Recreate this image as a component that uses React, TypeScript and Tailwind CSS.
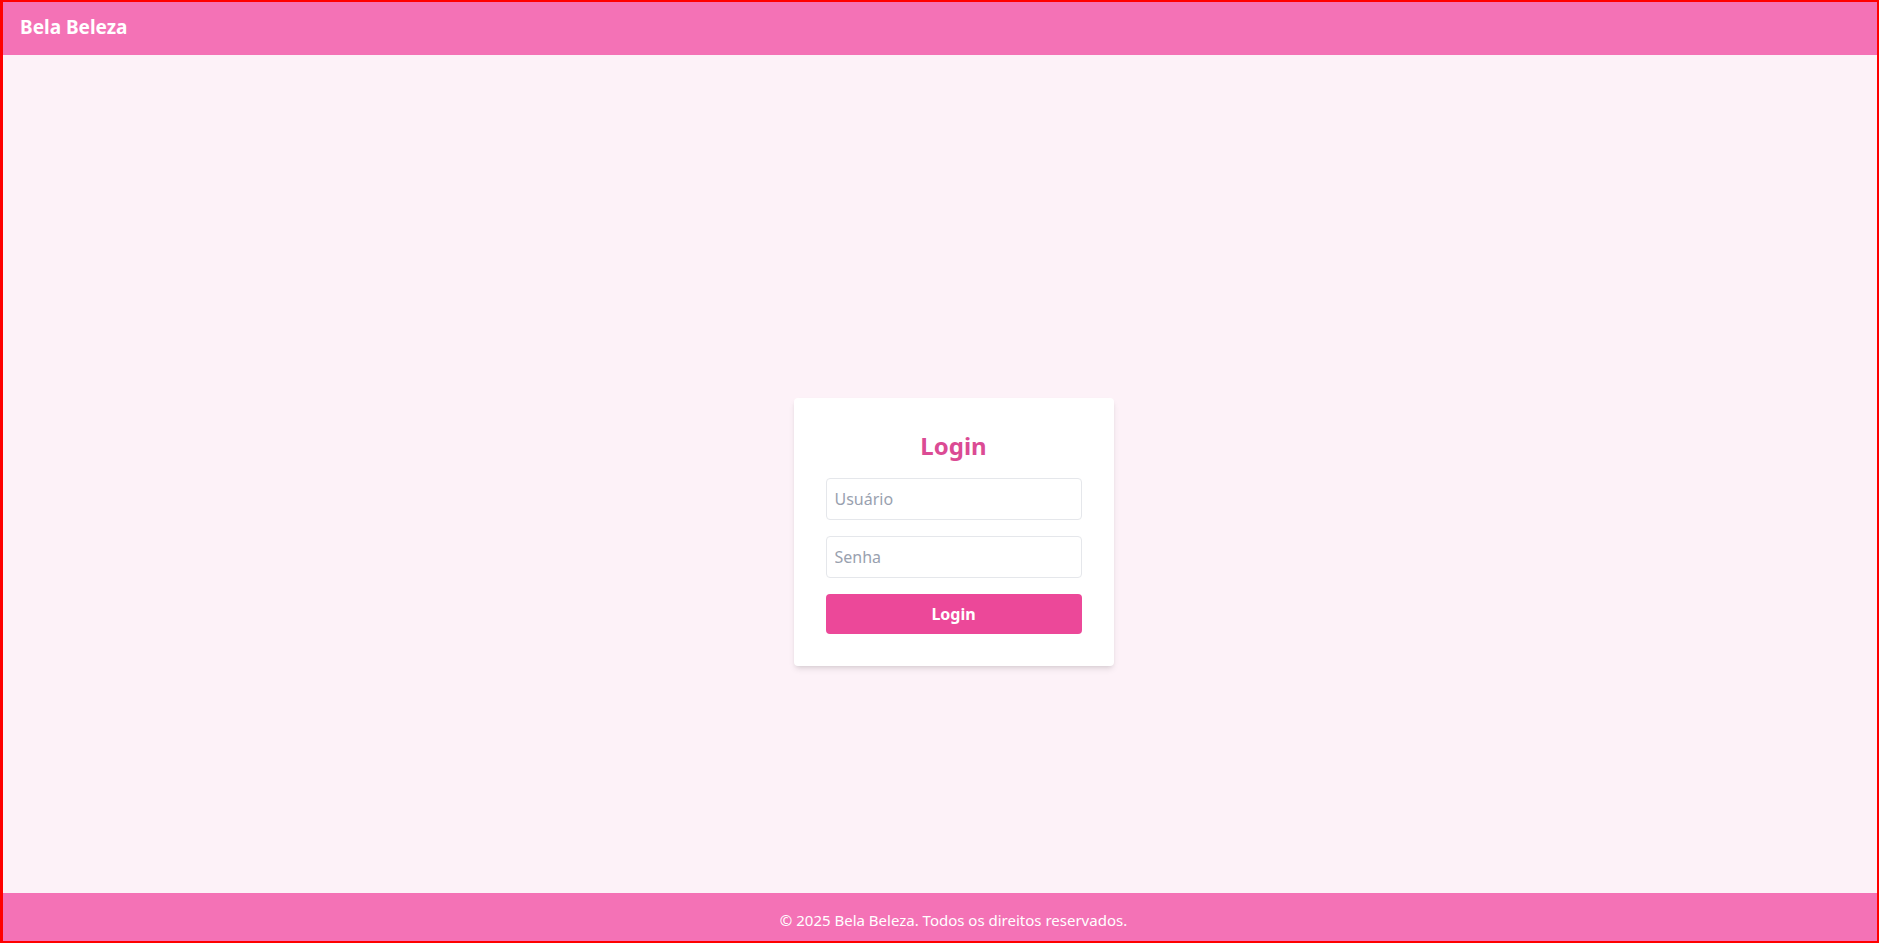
import React from 'react';

const App: React.FC = () => {
  return (
    <div
      className="h-screen flex flex-col border-2 border-l-[3px] border-[#ff0000] bg-[#fdf2f8] overflow-hidden"
      style={{ fontFamily: '"Segoe UI", "Noto Sans", sans-serif' }}
    >
      {/* Header */}
      <header className="bg-[#f472b6] pl-[17px] pr-4 pb-[3px] h-[53px] flex items-center">
        <h1 className="text-white text-[19px] font-bold">Bela Beleza</h1>
      </header>

      {/* Main */}
      <main className="flex-1 flex items-center justify-center">
        <div className="w-80 bg-white rounded p-8 shadow-md mt-[116px] ml-[27px]">
          <h2 className="text-2xl font-bold text-[#db4b94] text-center mb-4">Login</h2>
          <input
            type="text"
            placeholder="Usuário"
            className="w-full block border border-gray-200 rounded px-2 py-2 mb-4 text-base leading-6 placeholder-gray-400 outline-none"
          />
          <input
            type="password"
            placeholder="Senha"
            className="w-full block border border-gray-200 rounded px-2 py-2 mb-4 text-base leading-6 placeholder-gray-400 outline-none"
          />
          <button className="w-full bg-[#ec4899] text-white font-bold py-2 rounded text-base">
            Login
          </button>
        </div>
      </main>

      {/* Footer */}
      <footer className="bg-[#f472b6] pt-[15px] pb-[9px] pl-[27px] text-center text-white text-[15px] leading-6">
        © 2025 Bela Beleza. Todos os direitos reservados.
      </footer>
    </div>
  );
};

export default App;
